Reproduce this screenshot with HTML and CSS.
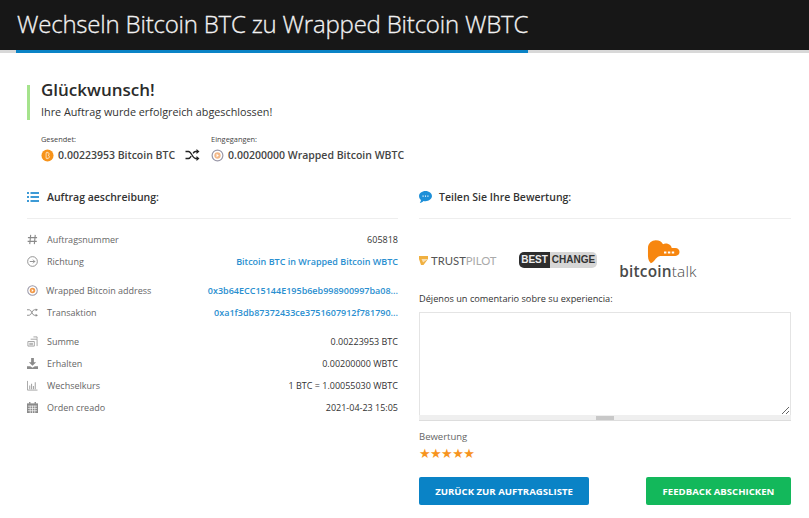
FILE: index.html
```html
<!DOCTYPE html>
<html lang="de">
<head>
  <meta charset="UTF-8">
  <meta name="viewport" content="width=device-width, initial-scale=1.0">
  <title>Wechseln Bitcoin BTC zu Wrapped Bitcoin WBTC</title>
  <link rel="stylesheet" href="styles.css">
</head>
<body>
  <header class="page-header">
    <h1>Wechseln Bitcoin BTC zu Wrapped Bitcoin WBTC</h1>
  </header>
  <div class="header-line"><div class="header-line-fill"></div></div>

  <main class="content">
    <section class="notice">
      <h2>Glückwunsch!</h2>
      <p>Ihre Auftrag wurde erfolgreich abgeschlossen!</p>
    </section>

    <section class="swap">
      <div class="swap-side">
        <div class="swap-label">Gesendet:</div>
        <div class="swap-value">
          <svg class="coin" viewBox="0 0 14 14"><circle cx="7" cy="7" r="6.5" fill="#f7931a"/><path d="M5.5 4h2.2c1.5 0 1.5 2.600 0 2.800 1.800.1 1.800 3.200 0 3.200H5.500zM6.600 3v1M6.600 10v1" fill="none" stroke="#fde2bd" stroke-width="1"/></svg>
          0.00223953 Bitcoin BTC
        </div>
      </div>
      <svg class="swap-icon" viewBox="0 0 14 12"><path d="M0 2.500h3c3 0 4 7 7 7h2M0 9.500h3c1.200 0 2-1.200 2.700-2.400M7.600 4.400C8.200 3.300 9 2.500 10 2.500h2" fill="none" stroke="#222" stroke-width="1.300"/><path d="M11 0l3 2.500L11 5zM11 7l3 2.500L11 12z" fill="#222"/></svg>
      <div class="swap-side">
        <div class="swap-label">Eingegangen:</div>
        <div class="swap-value">
          <svg class="coin" viewBox="0 0 14 14"><circle cx="7" cy="7" r="5.800" fill="#fff" stroke="#9a98a8" stroke-width="1.300"/><circle cx="7" cy="7" r="3.400" fill="#f3b98a"/><path d="M6 5v4l2.400-2z" fill="#fff"/></svg>
          0.00200000 Wrapped Bitcoin WBTC
        </div>
      </div>
    </section>

    <div class="columns">
      <section class="col col-left">
        <h3 class="col-title">
          <svg class="title-icon" viewBox="0 0 12 10"><path d="M0 0h2v2H0zM3.500 0H12v2H3.500zM0 4h2v2H0zM3.500 4H12v2H3.500zM0 8h2v2H0zM3.500 8H12v2H3.500z" fill="#3d9ad6"/></svg>
          Auftrag aeschreibung:
        </h3>

        <div class="details">
          <div class="detail-group">
            <div class="detail">
              <svg class="detail-icon" viewBox="0 0 12 12"><path d="M4 1 3 11M9 1 8 11M1 4h10M.7 8h10" fill="none" stroke="#8a8a8a" stroke-width="1.200"/></svg>
              <span class="detail-name">Auftragsnummer</span>
              <span class="detail-value">605818</span>
            </div>
            <div class="detail">
              <svg class="detail-icon" viewBox="0 0 12 12"><circle cx="6" cy="6" r="5.300" fill="none" stroke="#8a8a8a"/><path d="M3 6h5.500M6.500 4l2 2-2 2" fill="none" stroke="#8a8a8a"/></svg>
              <span class="detail-name">Richtung</span>
              <span class="detail-value link">Bitcoin BTC in Wrapped Bitcoin WBTC</span>
            </div>
          </div>
          <div class="detail-group">
            <div class="detail">
              <svg class="detail-icon" viewBox="0 0 12 12"><circle cx="6" cy="6" r="5.200" fill="#fff" stroke="#9a98a8" stroke-width="1.100"/><circle cx="6" cy="6" r="3" fill="#f29a4a"/><path d="M5.200 4.300v3.400l2-1.700z" fill="#fff"/></svg>
              <span class="detail-name tight">Wrapped Bitcoin address</span>
              <span class="detail-value link">0x3b64ECC15144E195b6eb998900997ba08...</span>
            </div>
            <div class="detail">
              <svg class="detail-icon" viewBox="0 0 12 10"><path d="M0 2h2.500c2.500 0 3 6 5.500 6h2M0 8h2.500C5 8 5.500 2 8 2h2" fill="none" stroke="#8a8a8a"/><path d="M9.500.5 12 2 9.500 3.500zM9.500 6.500 12 8 9.500 9.500z" fill="#8a8a8a"/></svg>
              <span class="detail-name">Transaktion</span>
              <span class="detail-value link">0xa1f3db87372433ce3751607912f781790...</span>
            </div>
          </div>
          <div class="detail-group">
            <div class="detail">
              <svg class="detail-icon" viewBox="0 0 12 12"><path d="M1 6h7v5H1zM4 3.500h7V11M7 1h4v2" fill="none" stroke="#a0a0a0"/><path d="M2.500 8h4M2.500 9.500h4" stroke="#a0a0a0"/></svg>
              <span class="detail-name">Summe</span>
              <span class="detail-value">0.00223953 BTC</span>
            </div>
            <div class="detail">
              <svg class="detail-icon" viewBox="0 0 12 12"><path d="M4.500 0h3v4.500H10L6 8.500 2 4.500h2.500zM0 9h3.500L6 10.500 8.500 9H12v3H0z" fill="#8a8a8a"/></svg>
              <span class="detail-name">Erhalten</span>
              <span class="detail-value">0.00200000 WBTC</span>
            </div>
            <div class="detail">
              <svg class="detail-icon" viewBox="0 0 12 12"><path d="M.5 1v10h11" fill="none" stroke="#a0a0a0"/><path d="M3 6v4M5 4v6M7 6.500V10M9 2.500V10" stroke="#a0a0a0" stroke-width="1.100"/></svg>
              <span class="detail-name">Wechselkurs</span>
              <span class="detail-value">1 BTC = 1.00055030 WBTC</span>
            </div>
            <div class="detail">
              <svg class="detail-icon" viewBox="0 0 12 12"><path d="M0 1.500h12V12H0z" fill="#8a8a8a"/><path d="M3 0v2M9 0v2" stroke="#8a8a8a" stroke-width="1.500"/><path d="M1 4.500h10M1 7h10M1 9.500h10M3.500 4v8M6 4v8M8.500 4v8" stroke="#fff" stroke-width=".7"/></svg>
              <span class="detail-name">Orden creado</span>
              <span class="detail-value">2021-04-23 15:05</span>
            </div>
          </div>
        </div>
      </section>

      <section class="col col-right">
        <h3 class="col-title chat-title">
          <svg class="title-icon chat" viewBox="0 0 14 13"><path d="M7 0c3.900 0 7 2.500 7 5.500S10.900 11 7 11c-.8 0-1.500-.1-2.200-.3C3.800 11.700 2.500 12.700.8 13c.8-1 1.200-2 1.300-3.200C.8 8.800 0 7.200 0 5.500 0 2.500 3.100 0 7 0z" fill="#1d8fd8"/><path d="M3.800 5.500h1.200M6.400 5.500h1.200M9 5.500h1.200" stroke="#fff" stroke-width="1.200"/></svg>
          Teilen Sie Ihre Bewertung:
        </h3>

        <div class="logos">
          <div class="trustpilot">
            <svg class="tp-star" viewBox="0 0 9 9"><path d="M0 0h9v3L4.500 9H2L0 3z" fill="#f0b040"/><path d="M2.500 3 9 3 4 6.500z" fill="#fff" opacity=".6"/></svg>
            <span>TRUST</span><span class="tp-light">PILOT</span>
          </div>
          <div class="bestchange"><span class="bc-dark">BEST</span><span class="bc-light">CHANGE</span></div>
          <div class="bitcointalk">
            <svg class="bt-cloud" viewBox="0 0 34 24"><path d="M1 8C1 3 5 0 9 0c4 0 6 1.500 7.500 4C18 3 22 3 24 5c1 1 1.300 2 1.500 3H29c3 0 4.500 2 4.500 4s-1.500 4-4.500 4H14c-2 0-3.500 1-5 3-1.500 2-3 4-5 4.500C2.500 22 1 20 1 16z" fill="#f7860f"/><path d="M17.500 12.500h2.500M21.500 12.500H24M25.500 12.500H28" stroke="#fff" stroke-width="2"/></svg>
            <div class="bt-name">bitcoin<span class="bt-light">talk</span></div>
          </div>
        </div>

        <label class="field-label" for="comment">Déjenos un comentario sobre su experiencia:</label>
        <textarea class="comment" id="comment"></textarea>
        <div class="grip-bar"><span class="grip"></span></div>

        <div class="rating-label">Bewertung</div>
        <div class="stars">★★★★★</div>

        <div class="actions">
          <button class="btn btn-blue">ZURÜCK ZUR AUFTRAGSLISTE</button>
          <button class="btn btn-green">FEEDBACK ABSCHICKEN</button>
        </div>
      </section>
    </div>
  </main>
</body>
</html>
```

FILE: styles.css
```css
* {
  margin: 0;
  padding: 0;
  box-sizing: border-box;
}

body {
  font-family: 'Open Sans', sans-serif;
  background-color: #fff;
  color: #333;
  overflow: hidden;
}

.page-header {
  height: 50px;
  background-color: #171717;
  padding-left: 17px;
}

.page-header h1 {
  font-size: 24px;
  font-weight: 300;
  line-height: 47px;
  color: #f2f2f2;
  letter-spacing: -0.2px;
  -webkit-text-stroke: 0.3px #f2f2f2;
}

.header-line {
  height: 3px;
  background-color: #d8d8d8;
  padding-left: 16px;
}

.header-line-fill {
  width: 512px;
  height: 3px;
  background-color: #0a83c6;
}

.content {
  padding: 32px 18px 0 27px;
}

.notice {
  display: flex;
  flex-direction: column;
  border-left: 3px solid #a5e38c;
  padding-left: 11px;
  height: 35px;
}

.notice h2 {
  font-size: 17px;
  font-weight: 600;
  line-height: 20px;
  margin-top: -5px;
  color: #2b2b2b;
}

.notice p {
  font-size: 10.8px;
  font-weight: 500;
  line-height: 14px;
  margin-top: 5px;
  color: #333;
}

.swap {
  display: flex;
  align-items: flex-end;
  margin-top: 15px;
  padding-left: 14px;
}

.swap-label {
  font-size: 7.4px;
  line-height: 9px;
  color: #444;
  margin-bottom: 4px;
}

.swap-value {
  display: flex;
  align-items: center;
  gap: 4px;
  font-size: 10.5px;
  font-weight: 600;
  line-height: 14px;
  color: #444;
}

.coin {
  width: 13px;
  height: 13px;
}

.swap-icon {
  width: 15px;
  height: 12px;
  margin: 0 11px 1px 10px;
}

.columns {
  display: flex;
  gap: 21px;
  margin-top: 28px;
}

.col-left {
  width: 371px;
}

.col-right {
  flex-grow: 1;
}

.col-title {
  display: flex;
  align-items: center;
  gap: 8px;
  height: 35px;
  font-size: 10.5px;
  font-weight: 600;
  line-height: 14px;
  color: #333;
  border-bottom: 1px solid #eee;
  padding-bottom: 9px;
  margin-top: -6px;
  margin-bottom: 9px;
}

.chat-title {
  gap: 7px;
}

.title-icon {
  width: 12px;
  height: 10px;
}

.title-icon.chat {
  width: 13px;
  height: 12px;
}

.details {
  display: flex;
  flex-direction: column;
  gap: 7px;
}

.detail-group {
  display: flex;
  flex-direction: column;
}

.detail {
  display: flex;
  align-items: center;
  height: 22px;
  font-size: 9px;
  color: #666;
}

.detail-icon {
  width: 11px;
  height: 11px;
  flex-shrink: 0;
}

.detail-name {
  margin-left: 9px;
}

.detail-name.tight {
  margin-left: 8px;
}

.detail-value {
  margin-left: auto;
  color: #333;
}

.detail-value.link {
  color: #2a8fd0;
  font-weight: 600;
}

.logos {
  display: flex;
  align-items: center;
  height: 71px;
  margin-top: -9px;
  padding-top: 11px;
}

.trustpilot {
  display: flex;
  align-items: center;
  font-family: 'Lato', sans-serif;
  font-size: 11.3px;
  color: #555;
  width: 100px;
}

.tp-star {
  width: 9px;
  height: 9px;
  margin-right: 3px;
}

.tp-light {
  color: #aaa;
}

.bestchange {
  display: flex;
  width: 78px;
  height: 16px;
  border-radius: 5px;
  overflow: hidden;
  font-family: 'Liberation Sans', sans-serif;
  font-size: 10px;
  font-weight: 700;
  line-height: 16px;
  text-align: center;
}

.bc-dark {
  width: 31px;
  background-color: #2d2d2d;
  color: #eee;
}

.bc-light {
  flex-grow: 1;
  background-color: #d6d6d6;
  color: #333;
}

.bitcointalk {
  margin-left: 22px;
  display: flex;
  flex-direction: column;
  align-items: center;
  width: 78px;
}

.bt-cloud {
  width: 33px;
  height: 24px;
  margin-left: 11px;
}

.bt-name {
  font-size: 15.4px;
  font-weight: 600;
  line-height: 16px;
  color: #4a4a4a;
  letter-spacing: 0.2px;
}

.bt-light {
  font-weight: 300;
}

.field-label {
  display: block;
  font-size: 9.2px;
  line-height: 12px;
  color: #333;
  margin-top: 3px;
}

.comment {
  display: block;
  width: 100%;
  height: 103px;
  margin-top: 7px;
  border: 1px solid #e4e4e4;
  border-bottom: none;
  outline: none;
}

.grip-bar {
  display: flex;
  justify-content: center;
  align-items: center;
  height: 6px;
  background-color: #efefef;
  border-bottom: 1px solid #ddd;
}

.grip {
  width: 18px;
  height: 4px;
  background-color: #c8c8c8;
}

.rating-label {
  font-size: 9.5px;
  line-height: 12px;
  color: #666;
  margin-top: 10px;
}

.stars {
  font-family: 'DejaVu Sans', sans-serif;
  font-size: 13px;
  line-height: 13px;
  letter-spacing: -0.6px;
  color: #f7941d;
  margin-top: 4px;
}

.actions {
  display: flex;
  justify-content: space-between;
  margin-top: 17px;
}

.btn {
  height: 28px;
  border: none;
  border-radius: 2px;
  font-family: 'Open Sans', sans-serif;
  font-size: 9.6px;
  font-weight: 700;
  color: #fff;
}

.btn-blue {
  width: 170px;
  background-color: #0a83c6;
}

.btn-green {
  width: 145px;
  background-color: #13b85b;
}
```
